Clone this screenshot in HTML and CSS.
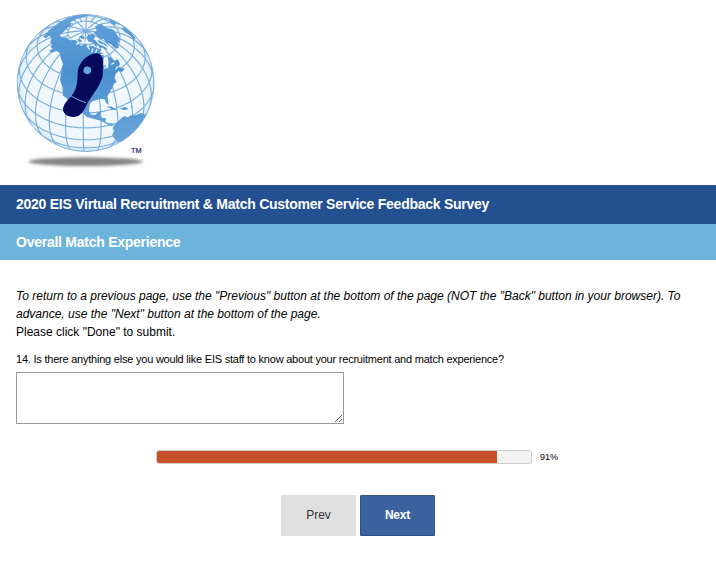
FILE: index.html
```
<!DOCTYPE html>
<html lang="en">
<head>
<meta charset="utf-8">
<title>2020 EIS Virtual Recruitment &amp; Match Customer Service Feedback Survey</title>
<link rel="stylesheet" href="styles.css">
</head>
<body>
<header class="logo">
<svg class="globe" viewBox="0 0 540 540" role="img" aria-label="Globe">
<defs>
<radialGradient id="sea"><stop offset="0" stop-color="#f4f9fd"/><stop offset=".9" stop-color="#eef6fc"/><stop offset="1" stop-color="#d9e9f6"/></radialGradient>
<linearGradient id="landfill" gradientUnits="userSpaceOnUse" x1="0" y1="45" x2="0" y2="420"><stop offset="0" stop-color="#62a1d8"/><stop offset=".45" stop-color="#4a90d1"/><stop offset="1" stop-color="#68a4d8"/></linearGradient>
<clipPath id="disc"><circle cx="257" cy="249" r="206"/></clipPath>
<filter id="soft" x="-10%" y="-50%" width="120%" height="200%"><feGaussianBlur stdDeviation="4"/></filter>
</defs>
<ellipse cx="257" cy="485" rx="171" ry="13" fill="#858585" filter="url(#soft)"/>
<circle cx="257" cy="249" r="206" fill="url(#sea)"/>
<g clip-path="url(#disc)">
<path id="grid" class="grid"/>
<g fill="url(#landfill)">
<path d="M129 110L150 88L180 66L219 47L250 42L275 44L251 52L230 57L211 66L214 77L202 83L190 97L178 106L187 112L206 114L220 121L239 118L247 124L235 130L242 138L256 132L266 140L278 137L290 145L304 148L300 157L310 160L312 176L304 190L315 193L312 207L324 205L326 185L322 167L334 174L344 183L353 177L360 191L356 201L375 207L365 216L356 212L347 222L344 235L350 246L342 251L336 265L329 277L322 288L324 297L326 315L319 310L314 298L301 297L286 301L272 307L268 320L267 334L273 344L287 344L294 336L304 334L300 348L307 355L318 354L316 365L326 370L337 370L343 375L334 378L322 373L309 366L297 361L280 356L259 350L246 337L226 321L205 298L189 287L187 260L180 239L184 217L189 193L181 170L179 156L168 153L154 159L148 151L158 147L151 139L157 134L150 126L157 115L148 107L137 115Z"/>
<path d="M285 79L303 72L320 84L337 87L350 101L360 119L352 130L357 145L344 144L332 132L320 129L311 117L296 114L288 104L280 99L290 92Z"/>
<path d="M264 105L276 102L286 108L281 119L292 122L303 124L318 133L325 145L319 150L309 142L302 146L294 137L284 135L276 126L266 125L259 114ZM238 109L250 107L255 117L245 116Z"/>
<path d="M318 321L332 319L346 326L353 331L340 329L329 324ZM358 326L375 321L386 326L374 331ZM392 319L399 321L396 324Z"/>
<path d="M343 375L353 365L365 353L373 348L383 352L393 346L408 346L422 339L434 343L444 352L425 381L407 401L384 418L361 428L349 422L336 407L342 393L338 384Z"/>
<path d="M326 55L343 60L349 72L342 75L331 66ZM365 84L377 82L391 96L407 115L402 119L390 106L374 96Z"/>
</g>
<path class="coast" d="M230 121L237 128L229 133M251 119L257 128L272 129M288 119L296 130L310 136M278 146L275 157M291 148L286 159M302 164L316 163M315 179L312 197M334 193L343 188M346 208L354 199M205 115L215 120M261 136L268 148M308 134L329 149"/>
</g>
<circle cx="257" cy="249" r="205" fill="none" stroke="#75a9da" stroke-width="2"/>
<path fill="#06095c" d="M286 160Q308 158 309 188L308 229C300 258 280 281 262 310C248 342 238 351 220 351C201 350 188 339 189 326C193 306 210 296 220 280C238 251 230 222 235 205C242 184 262 164 286 160Z"/>
<path d="M211 287Q236 302 258 308" fill="none" stroke="#7ca7d5" stroke-width="3"/>
<circle cx="262" cy="211" r="11.5" fill="#62a6df"/>
<text class="tm" x="393" y="459">TM</text>
</svg>
</header>
<h1 class="survey-title">2020 EIS Virtual Recruitment &amp; Match Customer Service Feedback Survey</h1>
<h2 class="page-title">Overall Match Experience</h2>
<main class="content">
<p class="intro"><em>To return to a previous page, use the "Previous" button at the bottom of the page (NOT the "Back" button in your browser). To<br>advance, use the "Next" button at the bottom of the page.</em><br><span>Please click "Done" to submit.</span></p>
<label class="question" for="answer">14. Is there anything else you would like EIS staff to know about your recruitment and match experience?</label>
<textarea id="answer" class="answer"></textarea>
<div class="progress"><div class="track"><div class="fill" style="width:91%"></div></div><span class="percent">91%</span></div>
<div class="buttons"><button class="btn prev">Prev</button><button class="btn next">Next</button></div>
</main>
<script src="globe.js"></script>
</body>
</html>
```
FILE: styles.css
```
body {
  margin: 0;
  background: #fff;
  color: #000;
  font-family: "Liberation Sans", Arial, sans-serif;
  font-size: 12px;
}
.logo { height: 185px; }
.globe { display: block; width: 180px; height: 180px; }
.grid { fill: none; stroke: #78addb; stroke-width: 3.4; }
.coast { fill: none; stroke: #edf5fb; stroke-width: 4; stroke-linejoin: bevel; }
.tm { font-size: 22px; fill: #25256e; stroke: #25256e; stroke-width: .6; }
.survey-title, .page-title {
  margin: 0;
  padding: 0 16px;
  color: #fff;
  font-size: 14px;
  font-weight: bold;
  letter-spacing: -0.255px;
  white-space: nowrap;
}
.survey-title { height: 39px; line-height: 39px; background: #225091; }
.page-title { height: 36px; line-height: 37px; background: #6db4dc; }
.content { padding: 27px 16px 0; }
.intro { margin: 0; line-height: 18px; white-space: nowrap; }
.question {
  display: block;
  margin: 11px 0 6px;
  font-size: 11px;
  line-height: 14px;
  letter-spacing: -0.222px;
  white-space: nowrap;
}
.answer {
  display: block;
  box-sizing: border-box;
  width: 328px;
  height: 52px;
  margin: 0;
  border: 1px solid #999;
  border-radius: 0;
  background: #fff;
}
.progress { display: flex; align-items: center; gap: 8px; height: 14px; margin: 26px 0 0 140px; }
.track {
  box-sizing: border-box;
  width: 376px;
  height: 14px;
  overflow: hidden;
  border: 1px solid #ccc;
  border-radius: 3px;
  background: #f2f2f2;
}
.fill { height: 100%; background: #c65128; }
.percent { font-size: 9px; }
.buttons { display: flex; justify-content: center; gap: 4px; margin-top: 31px; }
.btn {
  box-sizing: border-box;
  width: 75px;
  height: 41px;
  padding: 0 0 2px;
  border: 0;
  border-radius: 1px;
  box-shadow: 0 2px 0 #e8e8e8;
  font: 12px "Liberation Sans", Arial, sans-serif;
}
.prev { background: #e0e0e0; color: #333; }
.next { border: 1px solid #2f5288; background: #3a629f; color: #fff; font-weight: bold; letter-spacing: -0.2px; }
```
FILE: globe.js
```
// Orthographic graticule with 15 degree spacing.
const rad = Math.PI / 180;
const centerLat = 40.8 * rad;
const radius = 206;
function trace(points) {
  let d = "", pen = false;
  for (const [lat, lon] of points) {
    const p = lat * rad, l = lon * rad;
    const depth = Math.sin(centerLat) * Math.sin(p) + Math.cos(centerLat) * Math.cos(p) * Math.cos(l);
    if (depth < 0) { pen = false; continue; }
    const x = 257 + radius * Math.cos(p) * Math.sin(l);
    const y = 249 - radius * (Math.cos(centerLat) * Math.sin(p) - Math.sin(centerLat) * Math.cos(p) * Math.cos(l));
    d += (pen ? "L" : "M") + x.toFixed(1) + " " + y.toFixed(1);
    pen = true;
  }
  return d;
}
let d = "";
for (let lat = -45; lat <= 75; lat += 15) {
  const row = [];
  for (let lon = -180; lon <= 180; lon += 3) row.push([lat, lon]);
  d += trace(row);
}
// Every other meridian stops short of the pole so the lines do not merge.
for (let i = 0; i < 24; i++) {
  const lon = -182 + i * 15;
  const top = i % 2 ? 75 : 90;
  const column = [];
  for (let lat = -60; lat <= top; lat += 3) column.push([lat, lon]);
  d += trace(column);
}
document.getElementById("grid").setAttribute("d", d);
```
